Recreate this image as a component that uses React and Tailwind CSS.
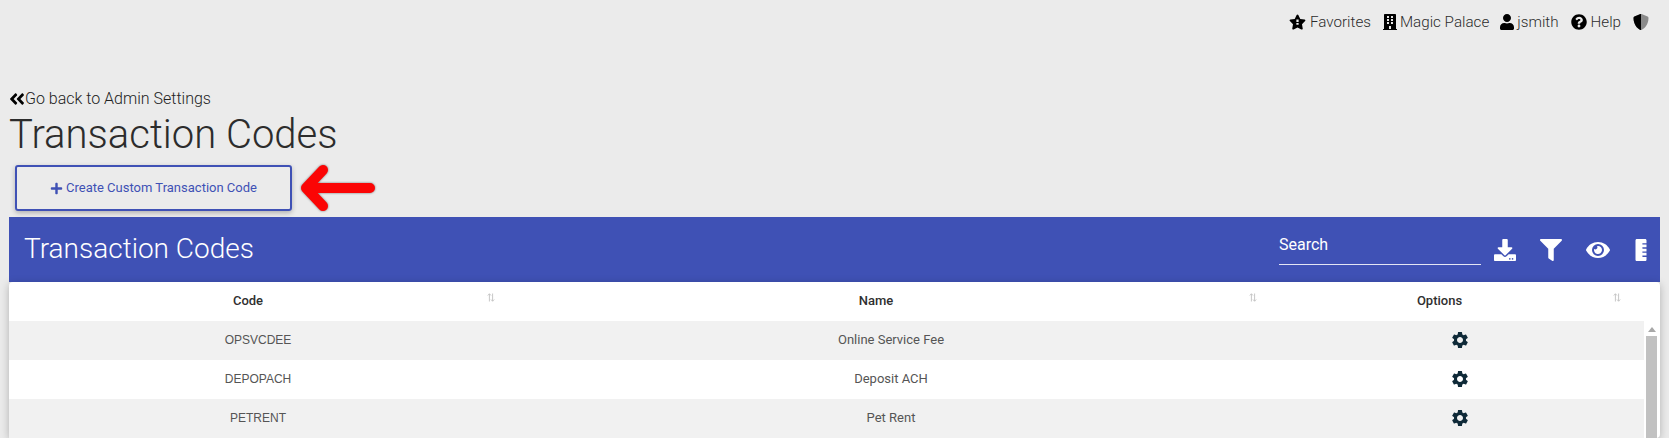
import {
  FaAngleDoubleLeft,
  FaBuilding,
  FaDownload,
  FaEye,
  FaFilter,
  FaPlus,
  FaQuestionCircle,
  FaRulerVertical,
  FaUser,
} from "react-icons/fa";
import { MdSettings } from "react-icons/md";

const rows = [
  { code: "OPSVCDEE", name: "Online Service Fee" },
  { code: "DEPOPACH", name: "Deposit ACH" },
  { code: "PETRENT", name: "Pet Rent" },
];

function SortIcon() {
  return (
    <svg width="8" height="9" viewBox="0 0 10 11" className="mb-[6px] shrink-0 text-[#c4c4c4]">
      <path d="M3 10.5V1M1 3l2-2.2L5 3M7 .5V10M5 8l2 2.2L9 8" fill="none" stroke="currentColor" strokeWidth="1.2" />
    </svg>
  );
}

function StarIcon() {
  return (
    <svg width="17" height="16" viewBox="0 0 576 512">
      <path
        fill="#000"
        d="M259.3 17.8L194 150.2 47.9 171.5c-26.2 3.8-36.7 36.1-17.7 54.6l105.7 103-25 145.5c-4.5 26.3 23.2 46 46.4 33.7L288 439.6l130.7 68.7c23.2 12.2 50.9-7.4 46.4-33.7l-25-145.5 105.7-103c19-18.5 8.5-50.8-17.7-54.6L382 150.2 316.7 17.8c-11.7-23.6-45.6-23.9-57.4 0z"
      />
      <path fill="#ebebeb" d="M250 170h76v90h-76zM250 290h76v60h-76z" />
    </svg>
  );
}

function ShieldIcon() {
  return (
    <svg width="16" height="16" viewBox="0 0 512 512">
      <path
        fill="#8a8a8a"
        d="M466.5 83.7l-192-80a48.15 48.15 0 0 0-36.9 0l-192 80C27.7 91.1 16 108.6 16 128c0 198.5 114.5 335.7 221.5 380.3 11.8 4.9 25.1 4.9 36.9 0C360.1 472.6 496 349.3 496 128c0-19.4-11.7-36.9-29.5-44.3z"
      />
      <path
        fill="#000"
        d="M256 0c-6.3 0-12.6 1.2-18.4 3.7l-192 80C27.7 91.1 16 108.6 16 128c0 198.5 114.5 335.7 221.5 380.3 5.9 2.5 12.2 3.7 18.5 3.7z"
      />
    </svg>
  );
}

function NavItem({ icon, label, className }) {
  return (
    <span className={`flex items-center ${className}`}>
      {icon}
      {label}
    </span>
  );
}

export default function App() {
  return (
    <div className="h-[438px] overflow-hidden bg-[#ebebeb] font-['Roboto',sans-serif]">
      {/* Top nav */}
      <nav className="flex h-[44px] items-center justify-end gap-[12px] pr-[20px] text-[15.2px] font-light text-[#2c2c2c]">
        <NavItem className="-mr-[1px] gap-[4px]" icon={<StarIcon />} label="Favorites" />
        <NavItem className="-mr-[2px] gap-[2px]" icon={<FaBuilding className="text-[16px] text-black" />} label="Magic Palace" />
        <NavItem className="gap-[2px]" icon={<FaUser className="text-[16px] text-black" />} label="jsmith" />
        <NavItem className="gap-[4px]" icon={<FaQuestionCircle className="text-[16px] text-black" />} label="Help" />
        <ShieldIcon />
      </nav>

      <div className="px-[9px] pt-[44px]">
        <a className="flex h-[22px] items-center text-[16px] font-light leading-none text-[#222]">
          <FaAngleDoubleLeft className="-mr-[1px] -ml-[1px] text-[18px] text-black" />
          Go back to Admin Settings
        </a>
        <h1 className="text-[40px] font-light leading-[50px] text-[#2c2c2c]">Transaction Codes</h1>

        <div className="mt-[5px] flex items-center pl-[6px]">
          <button className="flex h-[46px] w-[277px] items-center justify-center gap-[3px] rounded-[3px] border-2 border-[#3f51b5] text-[13px] text-[#3f51b5] shadow-[0_2px_5px_rgba(0,0,0,0.25)]">
            <FaPlus className="text-[13px]" />
            Create Custom Transaction Code
          </button>
          <svg
            width="84"
            height="46"
            viewBox="0 0 84 46"
            className="ml-[3px] drop-shadow-[0_0_1px_rgba(0,0,0,0.5)]"
          >
            <path
              d="M11 23H75M28 5L11 23L28 41"
              fill="none"
              stroke="#fb0505"
              strokeWidth="10"
              strokeLinecap="round"
              strokeLinejoin="round"
            />
          </svg>
        </div>

        {/* Table card */}
        <div className="mt-[6px]">
          <div className="flex h-[65px] items-center bg-[#3f51b5] text-white">
            <h2 className="ml-[15px] mb-[2px] flex-1 text-[28px] font-light">Transaction Codes</h2>
            <div className="mr-[13px] mb-[9px] flex h-[40px] w-[202px] items-center border-b border-[#e3e5f4] text-[16px]">
              Search
            </div>
            <div className="flex items-center gap-[24px] text-[22px]">
              <FaDownload />
              <FaFilter />
              <FaEye className="text-[24px]" />
              <FaRulerVertical className="-ml-[4px] mr-[8px]" />
            </div>
          </div>

          <div className="rounded-[4px] bg-white shadow-[0_2px_8px_rgba(0,0,0,0.25)]">
            <div className="grid h-[39px] grid-cols-[498px_768px_1fr] items-center pb-[2px] text-[13px] font-medium text-[#2f2f2f]">
              <div className="flex items-center pr-[12px]">
                <span className="flex-1 text-center">Code</span>
                <SortIcon />
              </div>
              <div className="flex items-center pr-[18px]">
                <span className="flex-1 pr-[4px] text-center">Name</span>
                <SortIcon />
              </div>
              <div className="flex items-center pr-[39px]">
                <span className="flex-1 pr-[9px] text-center">Options</span>
                <SortIcon />
              </div>
            </div>

            <div className="flex">
              <div className="w-[1635px]">
                {rows.map((row, i) => (
                  <div
                    key={row.code}
                    className={`grid h-[39px] grid-cols-[498px_768px_1fr] items-center pb-[2px] text-center text-[13px] text-[#555] ${
                      i % 2 === 0 ? "bg-[#f1f1f1]" : "bg-white"
                    }`}
                  >
                    <div className="font-['Liberation_Sans',sans-serif] text-[12px]">{row.code}</div>
                    <div>{row.name}</div>
                    <div className="flex justify-center">
                      <MdSettings className="text-[20px] text-[#0f2a38]" />
                    </div>
                  </div>
                ))}
              </div>
              <div className="ml-[2px] flex w-[11px] flex-col items-center">
                <div className="mt-[6px] h-0 w-0 border-x-[4px] border-b-[5px] border-x-transparent border-b-[#a8a8a8]" />
                <div className="mt-[4px] w-full flex-1 bg-[#c1c1c1]" />
              </div>
            </div>
          </div>
        </div>
      </div>
    </div>
  );
}
